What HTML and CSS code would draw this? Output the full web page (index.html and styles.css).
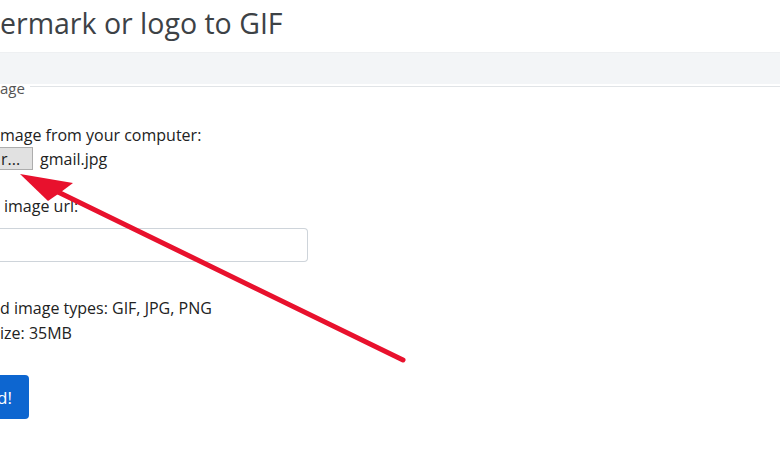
FILE: index.html
```html
<!DOCTYPE html>
<html>
<head>
    <meta charset="UTF-8">
    <title>Add watermark or logo to GIF</title>
    <link rel="stylesheet" href="styles.css">
</head>
<body>
    <div class="page">
        <h1 class="title">ermark or logo to GIF</h1>
        <div class="band"></div>

        <fieldset class="upload">
            <legend class="legend">age</legend>

            <div class="field">
                <label class="label">mage from your computer:</label>
                <div class="file-row">
                    <button class="browse">r...</button>
                    <span class="file-name">gmail.jpg</span>
                </div>
            </div>

            <div class="field">
                <label class="label url-label">image url:</label>
                <input type="text" class="url-input">
            </div>

            <div class="info">
                <p>d image types: GIF, JPG, PNG</p>
                <p>ize: 35MB</p>
            </div>

            <button class="submit">d!</button>
        </fieldset>

        <!-- annotation arrow drawn over the form -->
        <svg class="arrow" width="780" height="470" viewBox="0 0 780 470">
            <line x1="403" y1="360" x2="58" y2="192" stroke="#e8112d" stroke-width="5" stroke-linecap="round"/>
            <polygon points="20,174 73,183 61,192 48,201" fill="#e8112d"/>
        </svg>
    </div>
</body>
</html>
```

FILE: styles.css
```css
* {
    margin: 0;
    padding: 0;
    box-sizing: border-box;
}

body {
    background-color: #ffffff;
    font-family: "Open Sans", Arial, sans-serif;
    color: #222222;
    overflow: hidden;
}

.page {
    position: relative;
    width: 780px;
    height: 470px;
    overflow: hidden;
}

.title {
    font-size: 28.5px;
    font-weight: 400;
    color: #3d4246;
    line-height: 36px;
    padding-top: 5px;
    height: 52px;
}

.band {
    height: 32px;
    background-color: #f3f5f7;
    border-top: 1px solid #eef0f2;
}

.upload {
    border: none;
    border-top: 1px solid #e1e4e7;
}

.legend {
    font-size: 15px;
    color: #555555;
    padding-right: 5px;
    padding-top: 4px;
    line-height: 0;
}

.field {
    margin-top: 26px;
}

.upload .field:first-of-type {
    margin-top: 37px;
}

.label {
    display: block;
    font-size: 16px;
    line-height: 20px;
}

.url-label {
    padding-left: 4px;
}

.file-row {
    display: flex;
    align-items: center;
    gap: 7px;
    margin-top: 2px;
}

.browse {
    width: 33px;
    height: 23px;
    font-family: "Open Sans", Arial, sans-serif;
    font-size: 16px;
    text-align: left;
    text-indent: 1px;
    background-color: #e1e1e1;
    border: 1px solid #adadad;
    border-left: none;
    color: #222222;
}

.file-name {
    font-size: 16px;
}

.url-input {
    display: block;
    margin-top: 12px;
    width: 308px;
    height: 34px;
    border: 1px solid #ced4da;
    border-left: none;
    border-radius: 0 4px 4px 0;
}

.info {
    margin-top: 34px;
    font-size: 16px;
    line-height: 25px;
}

.submit {
    margin-top: 29px;
    width: 29px;
    height: 44px;
    background-color: #0d66d0;
    color: #ffffff;
    border: none;
    border-radius: 0 4px 4px 0;
    font-family: "Open Sans", Arial, sans-serif;
    font-size: 17px;
    text-align: left;
    text-indent: -3px;
}

.arrow {
    position: absolute;
    left: 0;
    top: 0;
}
```
